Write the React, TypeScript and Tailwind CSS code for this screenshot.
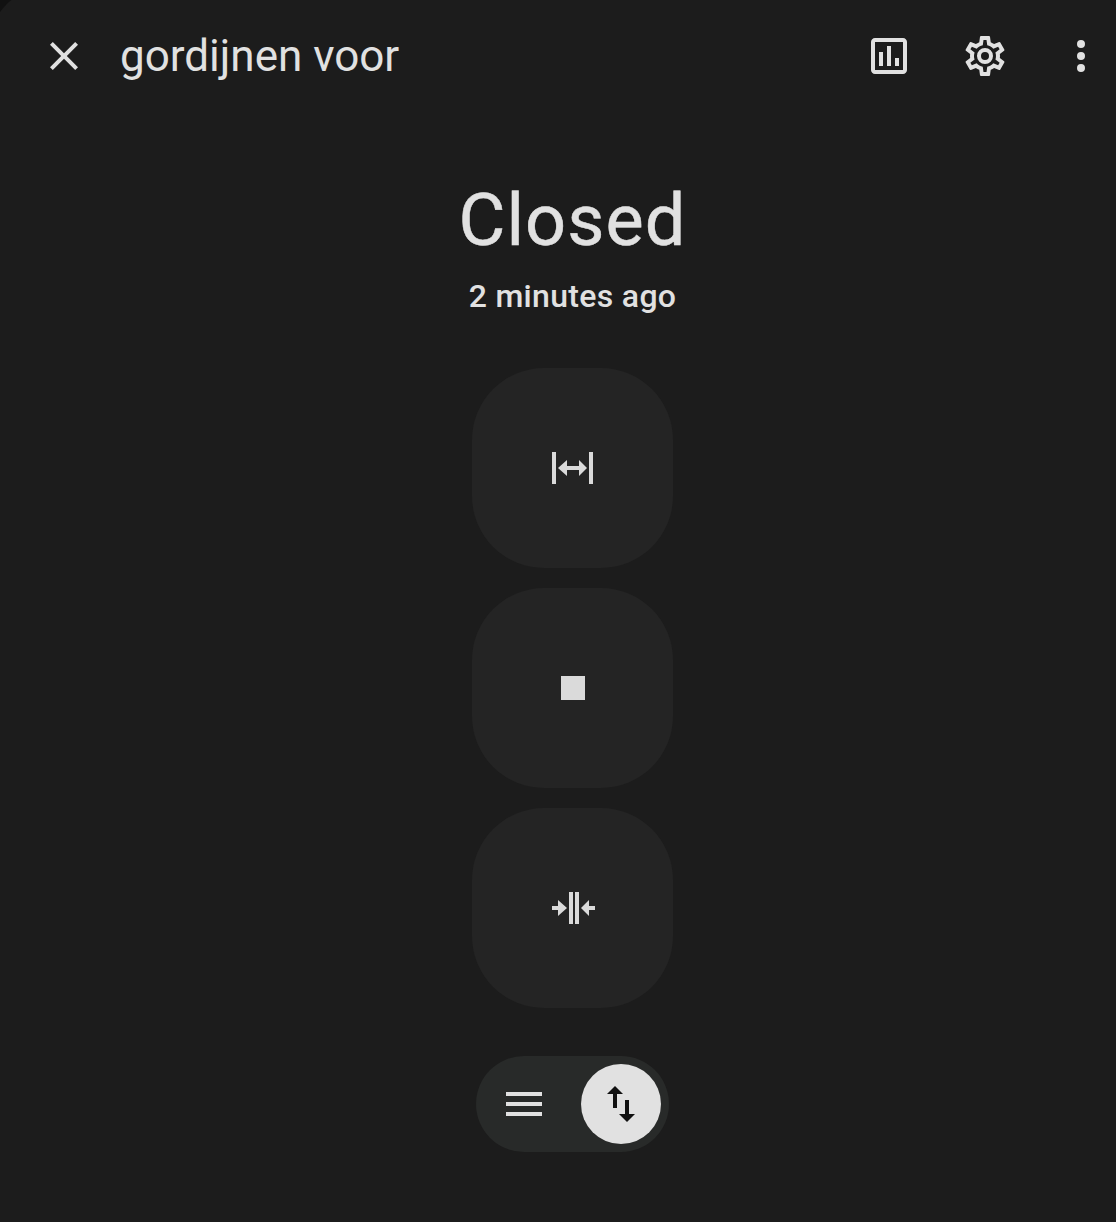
import type { ReactNode } from "react";

function Icon({ d }: { d: string }) {
  return (
    <svg viewBox="0 0 24 24" className="block size-12 fill-[#e1e1e1]">
      <path d={d} />
    </svg>
  );
}

const closePath =
  "M19,6.41L17.59,5L12,10.59L6.41,5L5,6.41L10.59,12L5,17.59L6.41,19L12,13.41L17.59,19L19,17.59L13.41,12L19,6.41Z";
const chartPath =
  "M9 17H7V10H9V17M13 17H11V7H13V17M17 17H15V13H17V17M19 19H5V5H19V19.1M19 3H5C3.9 3 3 3.9 3 5V19C3 20.1 3.9 21 5 21H19C20.1 21 21 20.1 21 19V5C21 3.9 20.1 3 19 3Z";
const cogPath =
  "M12,8A4,4 0 0,1 16,12A4,4 0 0,1 12,16A4,4 0 0,1 8,12A4,4 0 0,1 12,8M12,10A2,2 0 0,0 10,12A2,2 0 0,0 12,14A2,2 0 0,0 14,12A2,2 0 0,0 12,10M10,22C9.75,22 9.54,21.82 9.5,21.58L9.13,18.93C8.5,18.68 7.96,18.34 7.44,17.94L4.95,18.95C4.73,19.03 4.46,18.95 4.34,18.73L2.34,15.27C2.21,15.05 2.27,14.78 2.46,14.63L4.57,12.97L4.5,12L4.57,11L2.46,9.37C2.27,9.22 2.21,8.95 2.34,8.73L4.34,5.27C4.46,5.05 4.73,4.96 4.95,5.05L7.44,6.05C7.96,5.66 8.5,5.32 9.13,5.07L9.5,2.42C9.54,2.18 9.75,2 10,2H14C14.25,2 14.46,2.18 14.5,2.42L14.87,5.07C15.5,5.32 16.04,5.66 16.56,6.05L19.05,5.05C19.27,4.96 19.54,5.05 19.66,5.27L21.66,8.73C21.79,8.95 21.73,9.22 21.54,9.37L19.43,11L19.5,12L19.43,13L21.54,14.63C21.73,14.78 21.79,15.05 21.66,15.27L19.66,18.73C19.54,18.95 19.27,19.04 19.05,18.95L16.56,17.95C16.04,18.34 15.5,18.68 14.87,18.93L14.5,21.58C14.46,21.82 14.25,22 14,22H10M11.25,4L10.88,6.61C9.68,6.86 8.62,7.5 7.85,8.39L5.44,7.35L4.69,8.65L6.8,10.2C6.4,11.37 6.4,12.64 6.8,13.8L4.68,15.36L5.43,16.66L7.86,15.62C8.63,16.5 9.68,17.14 10.87,17.38L11.24,20H12.76L13.13,17.39C14.32,17.14 15.37,16.5 16.14,15.62L18.57,16.66L19.32,15.36L17.2,13.81C17.6,12.64 17.6,11.37 17.2,10.2L19.31,8.65L18.56,7.35L16.15,8.39C15.38,7.5 14.32,6.86 13.12,6.62L12.75,4H11.25Z";
const dotsPath =
  "M12,16A2,2 0 0,1 14,18A2,2 0 0,1 12,20A2,2 0 0,1 10,18A2,2 0 0,1 12,16M12,10A2,2 0 0,1 14,12A2,2 0 0,1 12,14A2,2 0 0,1 10,12A2,2 0 0,1 12,10M12,4A2,2 0 0,1 14,6A2,2 0 0,1 12,8A2,2 0 0,1 10,6A2,2 0 0,1 12,4Z";

function CoverButton({ label, children }: { label: string; children: ReactNode }) {
  return (
    <button
      aria-label={label}
      className="flex h-[200px] w-[201px] items-center justify-center rounded-[72px] bg-[#242424]"
    >
      <svg viewBox="0 0 49 48" className="block h-12 w-[49px] fill-[#dadada]">
        {children}
      </svg>
    </button>
  );
}

export default function App() {
  return (
    <div className="h-[1222px] w-[1116px] overflow-hidden bg-[#111111] font-[Roboto,sans-serif] text-[#e1e1e1]">
      <div className="-mt-3 -ml-2.5 h-[1234px] rounded-tl-[56px] bg-[#1c1c1c] pt-3 pl-2.5">
        <header className="flex h-28 items-center pr-[11px] pl-10">
          <button aria-label="Close">
            <Icon d={closePath} />
          </button>
          <h1 className="ml-8 flex-1 text-[44px] leading-[56px] font-normal whitespace-nowrap">gordijnen voor</h1>
          <div className="flex gap-12">
            <button aria-label="History">
              <Icon d={chartPath} />
            </button>
            <button aria-label="Settings">
              <Icon d={cogPath} />
            </button>
            <button aria-label="More">
              <Icon d={dotsPath} />
            </button>
          </div>
        </header>

        <main className="flex flex-col items-center pl-[29px]">
          <p className="mt-[65px] text-[72px] leading-[88px] tracking-[1.1px] [-webkit-text-stroke:0.5px_#e1e1e1]">Closed</p>
          <p className="mt-[7px] text-[32px] leading-[48px] font-medium tracking-[0.32px]">2 minutes ago</p>

          <div className="mt-12 flex flex-col gap-5">
            <CoverButton label="Open">
              <path d="M4 8H8V40H4ZM41 8H45V40H41ZM10 24L19 16V22H31V16L39 24L31 32V26H19V32Z" />
            </CoverButton>
            <CoverButton label="Stop">
              <path d="M13 12H37V36H13Z" />
            </CoverButton>
            <CoverButton label="Shut">
              <path d="M21 8H25V40H21ZM27 8H31V40H27ZM4 22H10V16L19 24L10 32V26H4ZM33 24L41 16V22H47V26H41V32Z" />
            </CoverButton>
          </div>

          <div className="mt-12 flex h-24 w-[193px] items-center justify-between rounded-full bg-[#282a29] p-2">
            <button aria-label="Position" className="flex size-20 items-center justify-center">
              <Icon d="M3,6H21V8H3V6M3,11H21V13H3V11M3,16H21V18H3V16Z" />
            </button>
            <button
              aria-label="Buttons"
              className="flex size-20 items-center justify-center rounded-full bg-[#e1e1e1]"
            >
              <svg viewBox="0 0 48 48" className="block size-12 fill-[#111111]">
                <path d="M18 6L26 14H20V28H16V14H10ZM28 20H32V34H38L30 42L22 34H28Z" />
              </svg>
            </button>
          </div>
        </main>
      </div>
    </div>
  );
}
